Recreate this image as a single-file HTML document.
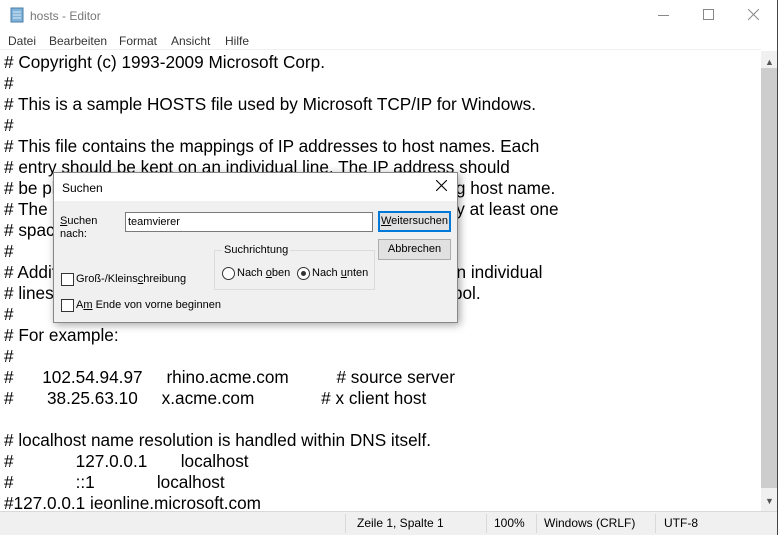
<!DOCTYPE html><html><head><style>
body{margin:0;width:778px;height:534px;overflow:hidden;background:#444;font-family:"Liberation Sans",sans-serif;position:relative}
.win{position:absolute;left:0;top:0;width:777px;height:534px;background:#fff}
.t{position:absolute;font-size:12px;color:#000}
.ed{position:absolute;left:0;top:49px;width:761px;height:462px;border-top:1px solid #f0f0f0}
.ln{position:absolute;left:4px;font-size:17.2px;white-space:pre;color:#000}
.sb{position:absolute;left:761px;top:51px;width:16px;height:461px;background:#f0f0f0}
.st{position:absolute;left:0;top:511px;width:777px;height:23px;background:#f0f0f0;border-top:1px solid #d9d9d9}
.sep{position:absolute;top:2px;width:1px;height:19px;background:#d9d9d9}
.dlg{position:absolute;left:53px;top:172px;width:403px;height:149px;background:#f0f0f0;border:1px solid #888;box-shadow:2px 2px 8px rgba(0,0,0,.35)}
.dt{position:absolute;left:0;top:0;width:403px;height:28px;background:#fff}
.d{position:absolute;font-size:11px;color:#000;white-space:nowrap}
.btn{position:absolute;width:71px;height:19px;background:#e1e1e1;border:1px solid #adadad;font-size:11px;text-align:center;line-height:19px}
.cb{position:absolute;width:11px;height:11px;border:1px solid #333;background:#fff}
.rb{position:absolute;width:11px;height:11px;border:1px solid #333;border-radius:50%;background:#fff}
</style></head><body><div class="win">
<svg style="position:absolute;left:9px;top:7px" width="16" height="16"><rect x="2" y="1" width="12" height="14" fill="#7fb2d9" stroke="#4a7da8"/><line x1="4" y1="5" x2="12" y2="5" stroke="#dfeaf5"/><line x1="4" y1="8" x2="12" y2="8" stroke="#dfeaf5"/><line x1="4" y1="11" x2="12" y2="11" stroke="#dfeaf5"/></svg>
<div class="t" style="left:30px;top:9px;color:#777">hosts - Editor</div>
<div style="position:absolute;left:658px;top:15px;width:11px;height:1px;background:#888"></div>
<div style="position:absolute;left:703px;top:9px;width:9px;height:9px;border:1px solid #888"></div>
<svg style="position:absolute;left:748px;top:9px" width="11" height="11"><path d="M0 0L11 11M11 0L0 11" stroke="#888"/></svg>
<div class="t" style="left:8px;top:34px;color:#333">Datei</div>
<div class="t" style="left:49px;top:34px;color:#333">Bearbeiten</div>
<div class="t" style="left:119px;top:34px;color:#333">Format</div>
<div class="t" style="left:171px;top:34px;color:#333">Ansicht</div>
<div class="t" style="left:225px;top:34px;color:#333">Hilfe</div>
<div class="ed">
<div class="ln" style="top:2px"># Copyright (c) 1993-2009 Microsoft Corp.</div>
<div class="ln" style="top:23px">#</div>
<div class="ln" style="top:44px"># This is a sample HOSTS file used by Microsoft TCP/IP for Windows.</div>
<div class="ln" style="top:65px">#</div>
<div class="ln" style="top:86px"># This file contains the mappings of IP addresses to host names. Each</div>
<div class="ln" style="top:107px"># entry should be kept on an individual line. The IP address should</div>
<div class="ln" style="top:128px"># be placed in the first column followed by the corresponding host name.</div>
<div class="ln" style="top:149px"># The IP address and the host name should be separated by at least one</div>
<div class="ln" style="top:170px"># space.</div>
<div class="ln" style="top:191px">#</div>
<div class="ln" style="top:212px"># Additionally, comments (such as these) may be inserted on individual</div>
<div class="ln" style="top:233px"># lines or following the machine name denoted by a '#' symbol.</div>
<div class="ln" style="top:254px">#</div>
<div class="ln" style="top:275px"># For example:</div>
<div class="ln" style="top:296px">#</div>
<div class="ln" style="top:317px">#      102.54.94.97     rhino.acme.com          # source server</div>
<div class="ln" style="top:338px">#       38.25.63.10     x.acme.com              # x client host</div>
<div class="ln" style="top:380px"># localhost name resolution is handled within DNS itself.</div>
<div class="ln" style="top:401px">#             127.0.0.1       localhost</div>
<div class="ln" style="top:422px">#             ::1             localhost</div>
<div class="ln" style="top:443px">#127.0.0.1 ieonline.microsoft.com</div>
</div>
<div class="sb"><div style="position:absolute;left:0;top:17px;width:16px;height:420px;background:#cdcdcd"></div>
<div style="position:absolute;left:4px;top:6px;font-size:9px;color:#555">&#9650;</div>
<div style="position:absolute;left:4px;top:445px;font-size:9px;color:#555">&#9660;</div></div>
<div class="st">
<div class="sep" style="left:345px"></div><div class="sep" style="left:486px"></div><div class="sep" style="left:536px"></div><div class="sep" style="left:655px"></div>
<div class="t" style="left:357px;top:4px">Zeile 1, Spalte 1</div>
<div class="t" style="left:494px;top:4px">100%</div>
<div class="t" style="left:544px;top:4px">Windows (CRLF)</div>
<div class="t" style="left:664px;top:4px">UTF-8</div>
</div>
<div class="dlg">
<div class="dt"></div>
<div class="d" style="left:8px;top:8px;font-size:12px">Suchen</div>
<svg style="position:absolute;left:382px;top:7px" width="11" height="11"><path d="M0 0L11 11M11 0L0 11" stroke="#000" stroke-width="1.1"/></svg>
<div class="d" style="left:6px;top:42px;line-height:13px"><u>S</u>uchen<br>nach:</div>
<div style="position:absolute;left:71px;top:39px;width:246px;height:18px;background:#fff;border:1px solid #7a7a7a"></div>
<div class="d" style="left:74px;top:43px">teamvierer</div>
<div class="btn" style="left:324px;top:38px;border:2px solid #0078d7;width:69px;height:17px;line-height:17px"><u>W</u>eitersuchen</div>
<div class="btn" style="left:324px;top:66px">Abbrechen</div>
<div style="position:absolute;left:160px;top:77px;width:159px;height:38px;border:1px solid #dcdcdc"></div>
<div class="d" style="left:168px;top:71px;background:#f0f0f0;padding:0 2px">Suchrichtung</div>
<div class="rb" style="left:168px;top:94px"></div>
<div class="d" style="left:183px;top:94px">Nach <u>o</u>ben</div>
<div class="rb" style="left:243px;top:94px"></div><div style="position:absolute;left:247px;top:98px;width:5px;height:5px;border-radius:50%;background:#333"></div>
<div class="d" style="left:258px;top:94px">Nach <u>u</u>nten</div>
<div class="cb" style="left:7px;top:100px"></div>
<div class="d" style="left:22px;top:100px">Groß-/Kleins<u>c</u>hreibung</div>
<div class="cb" style="left:7px;top:126px"></div>
<div class="d" style="left:22px;top:126px">A<u>m</u> Ende von vorne beginnen</div>
</div>
</div></body></html>
